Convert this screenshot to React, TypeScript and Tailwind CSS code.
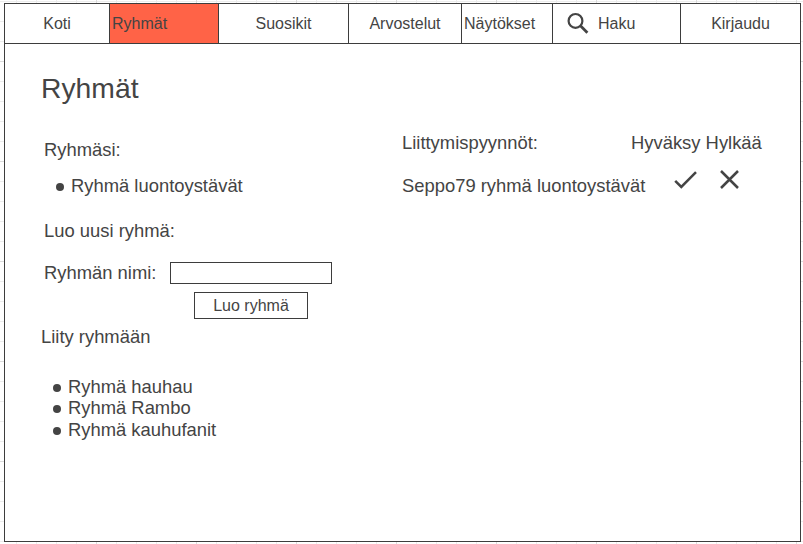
import type { ReactNode } from "react";

const navItem = "flex h-full shrink-0 items-center border-r border-[#3d3d3d]";

function Bullet({ children }: { children: ReactNode }) {
  return (
    <li className="flex h-[21.4px] items-start gap-[7px] leading-5">
      <span className="mt-[7px] size-2 shrink-0 rounded-full bg-[#444]" />
      <span>{children}</span>
    </li>
  );
}

export default function App() {
  return (
    <div className="h-[544px] w-[803px] overflow-hidden bg-white bg-[linear-gradient(#dcdcdc_1px,transparent_1px),linear-gradient(90deg,#dcdcdc_1px,transparent_1px),linear-gradient(#ececec_1px,transparent_1px),linear-gradient(90deg,#ececec_1px,transparent_1px)] bg-[length:100px_100px,100px_100px,20px_20px,20px_20px] bg-[position:0_61px,96px_0,0_1px,16px_0] pt-[3px] pl-1 font-['Liberation_Sans',Arial,sans-serif] text-[#444]">
      <main className="flex h-[539px] w-[797px] flex-col border border-[#3d3d3d] bg-white">
        <nav className="flex h-10 shrink-0 border-b border-[#3d3d3d] text-[16px] leading-5">
          <a className={`${navItem} w-[105px] justify-center`}>Koti</a>
          <a className={`${navItem} w-[109px] bg-[#ff6347] pl-[2px]`}>Ryhmät</a>
          <a className={`${navItem} w-[130px] justify-center`}>Suosikit</a>
          <a className={`${navItem} w-[113px] justify-center`}>Arvostelut</a>
          <a className={`${navItem} w-[91px] pl-[2px]`}>Näytökset</a>
          <a className={`${navItem} w-[128px] pl-[14px]`}>
            <svg className="mr-[9px] mb-px h-[22px] w-[22px]" viewBox="0 -0.4 22 22" fill="none" stroke="#444">
              <circle cx="8.5" cy="8.5" r="6.9" strokeWidth="2.2" />
              <path d="M13.2 13.2 20.4 20.4" strokeWidth="2.8" />
            </svg>
            Haku
          </a>
          <a className="flex flex-1 items-center justify-center">Kirjaudu</a>
        </nav>
        <div className="flex px-9 pt-7 text-[18.4px] leading-5">
          <section className="w-[361px] shrink-0">
            <h1 className="h-[68px] text-[28.3px] leading-8">Ryhmät</h1>
            <h2 className="ml-[3px] h-9">Ryhmäsi:</h2>
            <ul className="ml-[15px] h-[45px]">
              <Bullet>Ryhmä luontoystävät</Bullet>
            </ul>
            <h2 className="ml-[3px] h-[41px]">Luo uusi ryhmä:</h2>
            <div className="ml-[3px] flex h-[30px]">
              <label htmlFor="group" className="w-[126px] pt-px">Ryhmän nimi:</label>
              <input id="group" className="h-[22px] w-[162px] border border-[#3d3d3d] bg-white" />
            </div>
            <button className="ml-[153px] block h-[27px] w-[114px] border border-[#3d3d3d] bg-white text-[16px] leading-6">
              Luo ryhmä
            </button>
            <h2 className="mt-2 h-[50px]">Liity ryhmään</h2>
            <ul className="ml-3">
              <Bullet>Ryhmä hauhau</Bullet>
              <Bullet>Ryhmä Rambo</Bullet>
              <Bullet>Ryhmä kauhufanit</Bullet>
            </ul>
          </section>
          <section className="w-[362px] shrink-0 pt-[61px]">
            <div className="flex h-[43px]">
              <h2 className="w-[229px]">Liittymispyynnöt:</h2>
              <span className="whitespace-nowrap">Hyväksy Hylkää</span>
            </div>
            <div className="flex">
              <span className="w-[272px] whitespace-nowrap">Seppo79 ryhmä luontoystävät</span>
              <svg className="-mt-[6px] h-5 w-6" viewBox="0 0 24 20" fill="none" stroke="#444" strokeWidth="2.5">
                <path d="M1.2 10.8 7.3 16.9 22 2.2" />
              </svg>
              <svg className="-mt-[6px] ml-5 h-5 w-6" viewBox="0 0 24 20" fill="none" stroke="#444" strokeWidth="2.5">
                <path d="M3 1 20 18M20 1 3 18" />
              </svg>
            </div>
          </section>
        </div>
      </main>
    </div>
  );
}
